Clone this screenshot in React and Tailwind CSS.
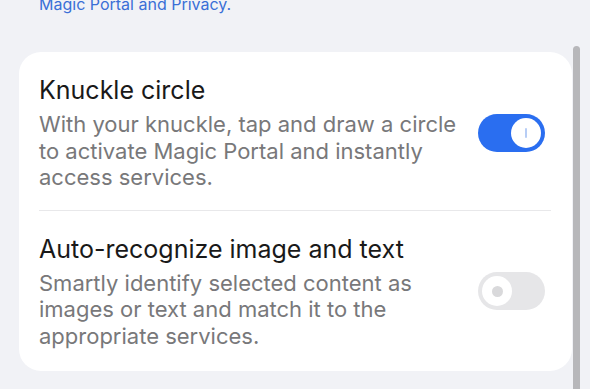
import React from 'react'

const Toggle = ({ on }) => {
  if (on) {
    return (
      <div className="w-[67px] h-[38px] shrink-0 rounded-full bg-[#2a6ef0] flex items-center justify-end pr-[4px]">
        <div className="w-[30px] h-[30px] rounded-full bg-white flex items-center justify-center">
          <div className="w-[2px] h-[10px] rounded-full bg-[#b7cdf5]"></div>
        </div>
      </div>
    )
  }
  return (
    <div className="w-[67px] h-[38px] shrink-0 rounded-full bg-[#e6e6e8] flex items-center pl-[4px]">
      <div className="w-[30px] h-[30px] rounded-full bg-white flex items-center justify-center">
        <div className="w-[11px] h-[11px] rounded-full bg-[#d9d9db]"></div>
      </div>
    </div>
  )
}

const SettingRow = ({ title, desc, on }) => (
  <div className="flex items-center gap-[16px]">
    <div className="flex-1 min-w-0">
      <div className="text-[25px] leading-[30px] text-[#191919]">{title}</div>
      <div className="mt-[6px] text-[22px] leading-[26.5px] text-[#78787a] whitespace-nowrap">{desc}</div>
    </div>
    <Toggle on={on} />
  </div>
)

export default function App() {
  return (
    <div className="relative w-[590px] h-[389px] overflow-hidden bg-[#f1f2f6]" style={{ fontFamily: 'Inter, "Noto Sans", sans-serif' }}>
      <div className="pl-[39px] -mt-[7px] text-[16px] leading-[22px] text-[#3a6fd6]">Magic Portal and Privacy.</div>

      <div className="mt-[37px] ml-[19px] w-[553px] rounded-[22px] bg-white pl-[20px] pr-[27px]">
        <div className="pt-[23px] pb-[19px]">
          <SettingRow
            on
            title="Knuckle circle"
            desc={<>With your knuckle, tap and draw a circle<br />to activate Magic Portal and instantly<br />access services.</>}
          />
        </div>
        <div className="h-px bg-[#e8e8ea] mr-[-6px]"></div>
        <div className="pt-[23px] pb-[22px]">
          <SettingRow
            title="Auto-recognize image and text"
            desc={<>Smartly identify selected content as<br />images or text and match it to the<br />appropriate services.</>}
          />
        </div>
      </div>

      {/* scrollbar */}
      <div className="absolute left-[573px] top-[46px] w-[7px] h-[343px] bg-[#b7b7ba] rounded-t-full"></div>
    </div>
  )
}
